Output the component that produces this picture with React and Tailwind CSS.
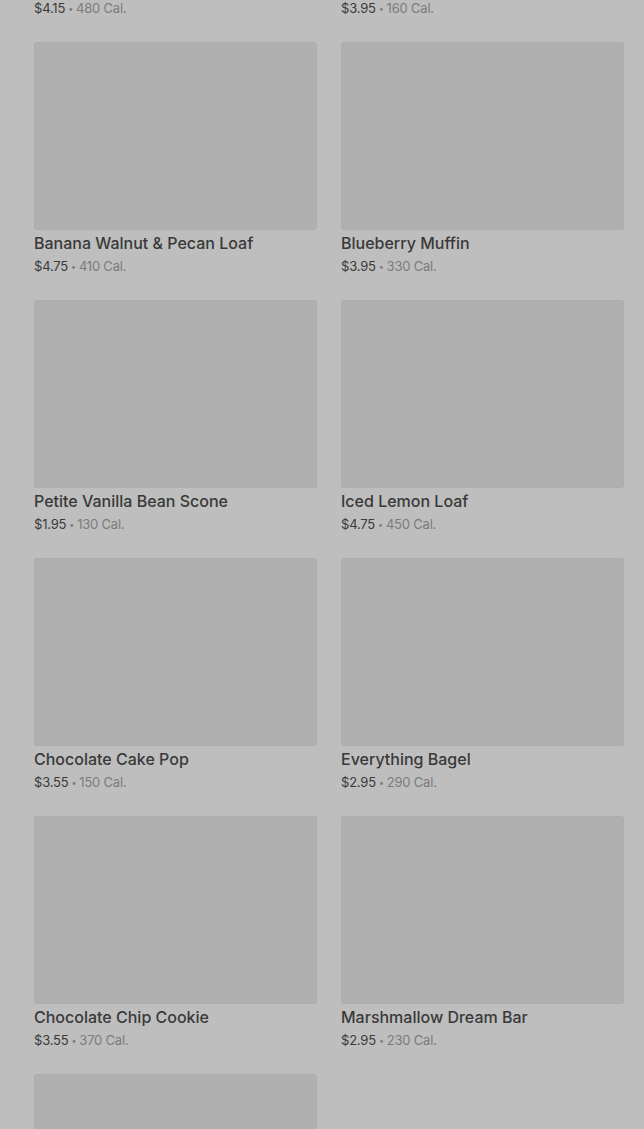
const items = [
  { name: 'Cinnamon Coffee Cake', price: '$4.15', cal: '480 Cal.' },
  { name: 'Butter Croissant', price: '$3.95', cal: '160 Cal.' },
  { name: 'Banana Walnut & Pecan Loaf', price: '$4.75', cal: '410 Cal.' },
  { name: 'Blueberry Muffin', price: '$3.95', cal: '330 Cal.' },
  { name: 'Petite Vanilla Bean Scone', price: '$1.95', cal: '130 Cal.' },
  { name: 'Iced Lemon Loaf', price: '$4.75', cal: '450 Cal.' },
  { name: 'Chocolate Cake Pop', price: '$3.55', cal: '150 Cal.' },
  { name: 'Everything Bagel', price: '$2.95', cal: '290 Cal.' },
  { name: 'Chocolate Chip Cookie', price: '$3.55', cal: '370 Cal.' },
  { name: 'Marshmallow Dream Bar', price: '$2.95', cal: '230 Cal.' },
  { name: 'Plain Bagel', price: '$2.45', cal: '280 Cal.' },
];

function MenuCard({ item }) {
  return (
    <div className="flex flex-col">
      <div className="h-[188px] rounded-[3px] bg-[#b0b0b0] shadow-[inset_0_0_0_1px_rgba(0,0,0,0.015)]" />
      <div className="mt-[2px] text-[16px] leading-[22px] font-medium text-[#393939]">
        {item.name}
      </div>
      <div className="mt-[1px] flex h-[22px] items-center text-[13px] leading-[22px] tracking-[-0.2px] text-[#3a3a3a]">
        <span>{item.price}</span>
        <span className="mx-[3px] text-[9px] leading-none text-[#7c7c7c]">•</span>
        <span className="text-[#7c7c7c]">{item.cal}</span>
      </div>
    </div>
  );
}

export default function App() {
  return (
    <div
      className="h-[1129px] overflow-hidden bg-[#bebebe]"
      style={{ fontFamily: 'Inter, "Noto Sans", sans-serif' }}
    >
      <div className="-mt-[216px] grid grid-cols-2 gap-x-6 gap-y-[23px] pl-[34px] pr-[20px]">
        {items.map((item) => (
          <MenuCard key={item.name} item={item} />
        ))}
      </div>
    </div>
  );
}
